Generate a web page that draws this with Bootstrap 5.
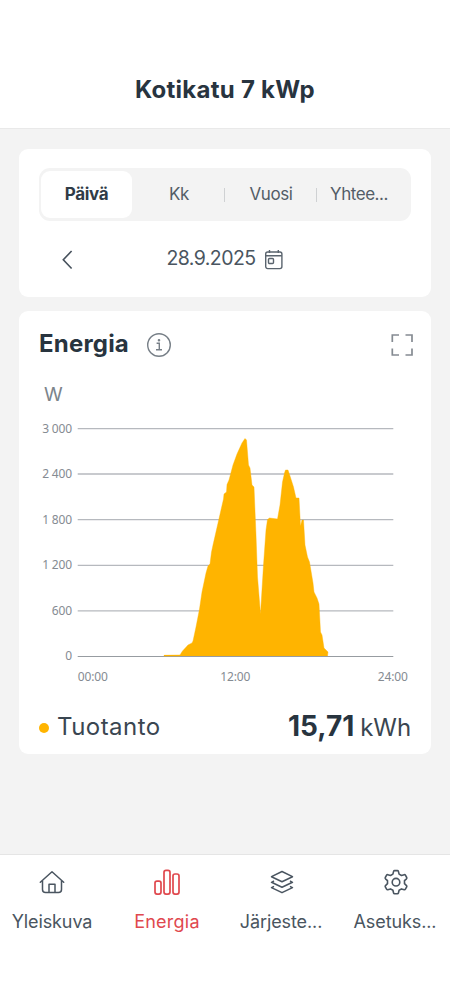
<!DOCTYPE html>
<html lang="fi">
<head>
<meta charset="utf-8">
<meta name="viewport" content="width=device-width, initial-scale=1">
<title>Kotikatu 7 kWp</title>
<link href="https://cdn.jsdelivr.net/npm/bootstrap@5.3.0/dist/css/bootstrap.min.css" rel="stylesheet">
<style>
  body { font-family: Inter, "Liberation Sans", sans-serif; color: #3f4a55; background: #f3f3f3; height: 1008px; overflow: hidden; }
  .app-head { height: 129px; padding-top: 75px; border-bottom: 1px solid #e9e9e9; }
  .app-title { font-size: 24px; line-height: 29px; font-weight: 700; color: #28343f; letter-spacing: .25px; }
  .app-main { padding: 20px 19px 0; gap: 14px; }
  .panel { background: #fff; border-radius: 9px; }
  .panel-date { height: 148px; padding: 19px 20px 0; }
  .panel-energy { height: 443px; padding: 0 20px; }
  .segments { height: 53px; padding: 3px 2px; border-radius: 11px; background: #f3f3f3; font-size: 17px; }
  .segment { width: 92px; height: 47px; position: relative; color: #535d67; letter-spacing: -.45px; }
  .segment.active { width: 91px; margin-right: 1px; background: #fff; border-radius: 9px; font-weight: 700; color: #303c47; letter-spacing: -.3px; }
  .segment.split::before { content: ""; position: absolute; left: -1px; top: 17px; width: 1px; height: 14px; background: #cfd1d3; }
  .segment.last span { margin-left: -8px; }
  .date-row { height: 52px; margin-top: 11px; }
  .date-text { font-size: 19.5px; line-height: 24px; color: #4a5560; letter-spacing: -.55px; }
  .energy-title { font-size: 24px; line-height: 30px; font-weight: 700; color: #28343f; letter-spacing: .2px; }
  .energy-head { height: 64px; padding-top: 1px; }
  .chart { margin-left: -20px; }
  .axis { font: 12px "Noto Sans", sans-serif; fill: #858b92; letter-spacing: -.15px; }
  .dot { width: 10px; height: 10px; background: #ffb400; margin-top: 2px; }
  .legend-row { margin-top: 19px; }
  .legend-name { font-size: 24px; line-height: 30px; color: #3a4651; letter-spacing: .45px; }
  .total-value { font-size: 28px; line-height: 34px; font-weight: 700; color: #28343f; }
  .total-unit { font-size: 24px; font-weight: 400; color: #3a4651; margin-left: 6px; letter-spacing: -.1px; }
  .tabs { height: 154px; background: #fff; border-top: 1px solid #e5e5e5; padding-top: 14px; }
  .tab { width: 115px; flex: none; font-size: 18px; line-height: 22px; color: #4a5560; gap: 14px; letter-spacing: -.1px; }
  .tab:first-child { margin-left: -5.5px; }
  .tab:nth-child(n+3) { margin-left: -1px; margin-right: 0; }
  .tab.active { color: #e0484e; letter-spacing: .25px; }
  svg { display: block; flex: none; }
</style>
</head>
<body class="d-flex flex-column">
<header class="app-head bg-white text-center flex-shrink-0">
  <h1 class="app-title m-0">Kotikatu 7 kWp</h1>
</header>

<main class="app-main d-flex flex-column flex-grow-1">
  <section class="panel panel-date">
    <div class="segments d-flex">
      <div class="segment active d-flex align-items-center justify-content-center"><span>Päivä</span></div>
      <div class="segment d-flex align-items-center justify-content-center"><span>Kk</span></div>
      <div class="segment split d-flex align-items-center justify-content-center"><span>Vuosi</span></div>
      <div class="segment split last d-flex align-items-center justify-content-center"><span>Yhtee...</span></div>
    </div>
    <div class="date-row d-flex align-items-center justify-content-center position-relative">
      <svg class="position-absolute" style="left:22px;top:17px" width="16" height="22" fill="none" stroke="#46515c" stroke-width="1.6"><path d="M10.600 2 2.300 10.800l8.300 8.700"/></svg>
      <span class="date-text">28.9.2025</span>
      <svg class="ms-2 mt-1" width="20" height="24" fill="none" stroke="#5a646e" stroke-width="1.4"><rect x="1.700" y="4" width="16.200" height="16.600" rx="2"/><path d="M1.700 7.800h16.200M5.500 2v3M14.300 2v3"/><rect x="4.500" y="10.500" width="5" height="5" rx="1"/></svg>
    </div>
  </section>

  <section class="panel panel-energy">
    <div class="energy-head d-flex align-items-center">
      <h2 class="energy-title m-0">Energia</h2>
      <svg style="margin-left:17px;margin-top:3px" width="26" height="26" fill="none" stroke="#777f87" stroke-width="1.4"><circle cx="13" cy="13" r="11.300"/><path d="M10.600 11.200h2.700v6.500M10 17.800h6"/><circle cx="13" cy="8.200" r=".6" fill="#777f87"/></svg>
      <svg class="ms-auto" style="margin-right:-3px;margin-top:3px" width="24" height="24" fill="none" stroke="#858b92" stroke-width="1.7"><path d="M2.300 9V2H9M15.500 2H22v7M2.300 15.500V22H9M15.500 22H22v-6.500"/></svg>
    </div>
    <svg class="chart" width="412" height="315" viewBox="19 375 412 315">
      <path d="M77.700 428.700H393.300M77.700 474H393.300M77.700 519.700H393.300M77.700 565.300H393.300M77.700 610.900H393.300" stroke="#b6b9be" stroke-width="1.300"/>
      <path d="M164 655.300 180 655 182.500 651 188 645 192 643 193 641 196 627 199.500 609 202 592 206 573 208 566 210 564 211.500 552 213 545 223.500 499 224 494 226.500 492 227 484.500 229 480 233 465 237 454 242 443 245 438.500 246.500 440 248.500 465 250 468 252 485 254 487 256 535 257.500 577 260.500 614 263.500 565 266 530 267.500 519.500 269.500 518 277.500 519 280 505 282.500 482 284.500 473 285.500 470 288 470 290 476 293.500 487 296 498 299 498 300.500 526 302 520 303.500 520 305 545 307.500 557 309.500 562 313 583 314 592 317 598 319 604 320.500 632 322 635 324 648 328 652 327.500 656H164Z" fill="#ffb400" stroke="#ffb400" stroke-width=".4"/>
      <path d="M77.700 656.500H393.300" stroke="#979ca1" stroke-width="1.200"/>
      <path d="M164 655.600H180" stroke="#ffb400" stroke-width="1.200"/>
      <g class="axis" text-anchor="end">
        <text x="72" y="432.500">3 000</text><text x="72" y="478">2 400</text><text x="72" y="523.700">1 800</text><text x="72" y="569.300">1 200</text><text x="72" y="615">600</text><text x="72" y="660.200">0</text>
      </g>
      <g class="axis" text-anchor="middle"><text x="92.700" y="680.500">00:00</text><text x="235.300" y="680.500">12:00</text><text x="392.800" y="680.500">24:00</text></g>
      <text x="44" y="401" font-size="19" fill="#7c848b">W</text>
    </svg>
    <div class="legend-row d-flex align-items-center">
      <span class="dot rounded-circle me-2"></span>
      <span class="legend-name">Tuotanto</span>
      <span class="total-value ms-auto">15,71<span class="total-unit">kWh</span></span>
    </div>
  </section>
</main>

<nav class="tabs d-flex flex-shrink-0">
  <div class="tab d-flex flex-column align-items-center">
    <svg width="28" height="28" fill="none" stroke="#4a5560" stroke-width="1.500" stroke-linejoin="round" stroke-linecap="round"><path d="M2.300 13.200 14 2.800l11.700 10.400M4.500 11.500v9q0 3 3 3h13q3 0 3-3v-9M11 23.500v-8.300h6v8.300"/></svg>
    <span>Yleiskuva</span>
  </div>
  <div class="tab active d-flex flex-column align-items-center">
    <svg width="28" height="28" fill="none" stroke="#e0484e" stroke-width="1.700"><rect x="2" y="12.100" width="6" height="13" rx="2"/><rect x="11" y="1.400" width="6" height="23.700" rx="2"/><rect x="20" y="5" width="6" height="20.100" rx="2"/></svg>
    <span>Energia</span>
  </div>
  <div class="tab d-flex flex-column align-items-center">
    <svg style="margin-left:1px" width="28" height="28" fill="none" stroke="#4a5560" stroke-width="1.500" stroke-linejoin="round"><path d="M14 2.500 24.500 7.700 14 12.700 3.500 7.700ZM6 12l-2.500 1.300L14 18.300l10.500-5-2.500-1.300M6 17.300l-2.500 1.300L14 23.700l10.500-5.100-2.500-1.300"/></svg>
    <span>Järjeste...</span>
  </div>
  <div class="tab d-flex flex-column align-items-center">
    <svg style="margin-left:2px" width="28" height="28" fill="none" stroke="#4a5560" stroke-width="1.600" stroke-linejoin="round"><path d="M12.600 1.600h2.800q.8 0 1 .8l.7 2.700 2.400 1.400 2.700-.8q.8-.2 1.200.5l1.300 2.300q.4.700-.2 1.300l-2 1.900v3l2 1.900q.6.600.2 1.300l-1.300 2.300q-.4.700-1.200.5l-2.700-.8-2.400 1.400-.7 2.700q-.2.800-1 .8h-2.800q-.8 0-1-.8l-.7-2.700-2.400-1.400-2.700.8q-.8.2-1.200-.5l-1.300-2.300q-.4-.7.2-1.300l2-1.900v-3l-2-1.900q-.6-.6-.2-1.300l1.300-2.300q.4-.7 1.200-.5l2.700.8 2.400-1.400.7-2.700q.2-.8 1-.8Z"/><circle cx="14" cy="13.200" r="3.800"/></svg>
    <span>Asetuks...</span>
  </div>
</nav>
<script src="https://cdn.jsdelivr.net/npm/bootstrap@5.3.0/dist/js/bootstrap.bundle.min.js"></script>
</body>
</html>
